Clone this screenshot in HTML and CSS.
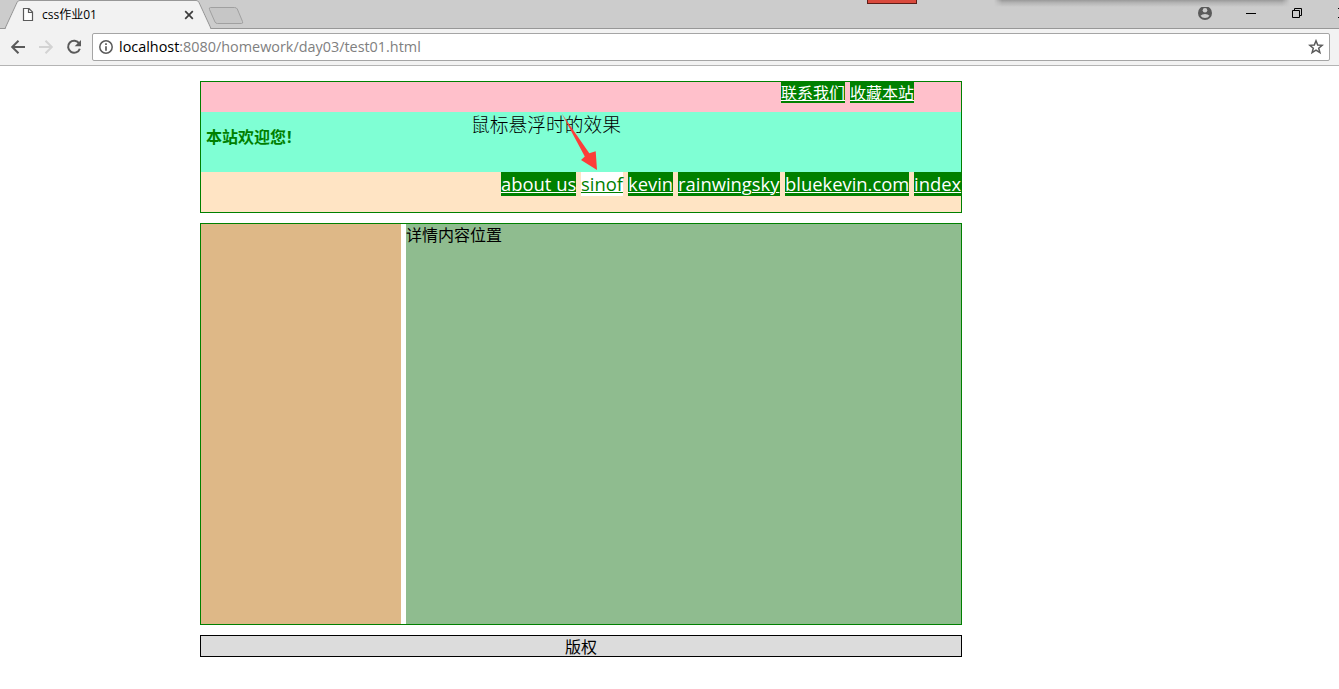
FILE: index.html
```html
<!DOCTYPE html>
<html lang="zh">
<head>
<meta charset="utf-8">
<title>css作业01</title>
<link rel="stylesheet" href="styles.css">
</head>
<body>
<div class="tabstrip">
  <svg class="tab-shape" width="250" height="29" viewBox="0 0 250 29">
    <path d="M0 28.5H5L17 2.5Q18 .5 20 .5H196Q198 .5 199 2.5L211 28.5H250" fill="none" stroke="#979797"/>
    <path d="M5.5 29L17.5 2.8Q18.3 1 20 1H196Q197.700 1 198.500 2.800L210.500 29Z" fill="#f2f2f2"/>
    <path d="M210.500 7.500H234.500Q236.500 7.500 237.300 9L242.500 21.500Q243.300 23.500 241.500 23.500H217.500Q215.700 23.500 215 22L209.500 9.500Q208.700 7.500 210.500 7.500Z" fill="#c6c6c6" stroke="#a0a0a0"/>
  </svg>
  <div class="tab">
    <svg class="page-icon" width="12" height="15" viewBox="0 0 12 15"><path d="M1.500 1.500H7L10.500 5V13.500H1.500ZM6.500 1.500V5.500H10.500" fill="#fff" stroke="#5a5a5a" stroke-width="1.200"/></svg>
    <span class="tab-title">css作业01</span>
    <svg class="tab-close" width="10" height="10" viewBox="0 0 10 10"><path d="M1.200 1.200L8.800 8.800M8.800 1.200L1.200 8.800" stroke="#3c3c3c" stroke-width="1.700"/></svg>
  </div>
  <div class="red-chip"></div>
  <div class="top-shadow"></div>
  <div class="window-buttons">
    <svg width="141" height="28" viewBox="0 0 141 28">
      <circle cx="7" cy="13" r="7" fill="#5a5a5a"/>
      <circle cx="7" cy="10.300" r="2.300" fill="#ccc"/>
      <path d="M2.500 15.700Q4 14 7 14T11.500 15.700Q10 18 7 18T2.500 15.700Z" fill="#ccc"/>
      <path d="M48 13.500H58" stroke="#000"/>
      <path d="M94.500 10.500H101.500V17.500H94.500ZM96.500 10.500V8.500H103.500V15.500H101.500" fill="none" stroke="#000"/>
      <path d="M140 8.500H141M140 17.500H141" stroke="#000"/>
    </svg>
  </div>
</div>
<div class="toolbar">
  <svg class="nav-icons" width="92" height="36" viewBox="0 29 92 36">
    <path d="M25 47H12.500M18.500 40.700L12.200 47L18.500 53.300" fill="none" stroke="#5a5a5a" stroke-width="2"/>
    <path d="M39 47H51.500M45.500 40.700L51.800 47L45.500 53.300" fill="none" stroke="#d3d3d3" stroke-width="2"/>
    <path d="M79.200 43.600A6 6 0 1 0 79.800 48.700" fill="none" stroke="#5a5a5a" stroke-width="2"/>
    <path d="M81 40V46.300H74.700Z" fill="#5a5a5a"/>
  </svg>
  <div class="omnibox">
    <svg class="info" width="14" height="14" viewBox="0 0 14 14"><circle cx="7" cy="7" r="6.200" fill="none" stroke="#5a5a5a" stroke-width="1.500"/><path d="M7 3.300V5M7 6.200V10.700" stroke="#5a5a5a" stroke-width="1.700"/></svg>
    <span class="url"><span class="host">localhost</span>:8080/homework/day03/test01.html</span>
    <svg class="star" width="16" height="16" viewBox="0 0 16 16"><path d="M8 1.800L9.700 6L14.200 6.300L10.700 9.200L11.900 13.600L8 11.200L4.100 13.600L5.300 9.200L1.800 6.300L6.300 6Z" fill="none" stroke="#5a5a5a" stroke-width="1.500"/></svg>
  </div>
</div>
<main class="page">
  <header class="header">
    <div class="top"><a class="link">联系我们</a><a class="link">收藏本站</a></div>
    <div class="banner"><strong class="welcome">本站欢迎您<span class="mark">!</span></strong></div>
    <nav class="menu">
      <a class="link about">about us</a><a class="link sinof">sinof</a><a class="link kevin">kevin</a><a class="link rain">rainwingsky</a><a class="link blue">bluekevin.com</a><a class="link index">index</a>
    </nav>
    <div class="note">鼠标悬浮时的效果</div>
    <svg class="arrow" width="40" height="60" viewBox="560 112 40 60"><path d="M561.700 113.500L589.300 153.300L595.700 151.300L597 170L581 160L584.800 156.500Z" fill="#fc3d39"/></svg>
  </header>
  <section class="content">
    <aside class="side"></aside>
    <div class="detail">详情内容位置</div>
  </section>
  <footer class="footer">版权</footer>
</main>
</body>
</html>
```
FILE: styles.css
```css
* { box-sizing: border-box; }
body {
  margin: 0;
  height: 689px;
  overflow: hidden;
  background: #fff;
  font: 16px/21px "Open Sans", "Noto Sans CJK SC", sans-serif;
  color: #000;
}
svg { display: block; flex: none; }
.tabstrip {
  position: relative;
  display: flex;
  height: 29px;
  background: #ccc;
  border-bottom: 1px solid #979797;
}
.tab-shape { position: absolute; left: 0; top: 0; }
.tab {
  position: relative;
  display: flex;
  align-items: center;
  width: 211px;
  height: 29px;
  padding-left: 22px;
}
.tab-title {
  width: 142px;
  margin-left: 8px;
  font-size: 12px;
  line-height: 16px;
  white-space: nowrap;
}
.red-chip {
  position: absolute;
  left: 867px;
  top: 0;
  width: 50px;
  height: 4px;
  background: #d94a3d;
  border: 1px solid #5d1d18;
  border-top: 0;
}
.top-shadow {
  position: absolute;
  left: 994px;
  top: 0;
  width: 296px;
  height: 7px;
  background: linear-gradient(#999, #b4b4b4 40%, #ccc);
  -webkit-mask-image: linear-gradient(90deg, transparent, #000 8px, #000 288px, transparent);
  mask-image: linear-gradient(90deg, transparent, #000 8px, #000 288px, transparent);
}
.window-buttons { margin-left: auto; }
.toolbar {
  display: flex;
  height: 37px;
  background: #f2f2f2;
  border-bottom: 1px solid #b4b4b4;
}
.omnibox {
  display: flex;
  align-items: center;
  width: 1238px;
  height: 28px;
  margin-top: 4px;
  padding: 0 5px 0 6px;
  background: #fff;
  border: 1px solid #a5a5a5;
  border-radius: 2px;
}
.url {
  margin-left: 6px;
  padding-bottom: 2px;
  font-size: 14.400px;
  color: #808080;
  white-space: nowrap;
}
.host { color: #000; }
.star { margin-left: auto; }
.page {
  display: flex;
  flex-direction: column;
  gap: 10px;
  width: 762px;
  margin: 15px 0 0 200px;
}
.header {
  position: relative;
  height: 132px;
  border: 1px solid green;
}
.top {
  display: flex;
  gap: 5px;
  height: 30px;
  padding-left: 580px;
  background: pink;
}
.top .link { height: 21px; width: 64px; line-height: 23px; }
.link {
  background: green;
  color: #fff;
  text-decoration: underline;
  text-decoration-thickness: 1px;
  white-space: nowrap;
}
.banner {
  height: 60px;
  padding: 15px 5px;
  background: aquamarine;
}
.welcome { color: green; }
.mark { margin-left: 1px; }
.menu {
  display: flex;
  justify-content: flex-end;
  gap: 5px;
  height: 40px;
  background: bisque;
  font-size: 18.400px;
  line-height: 24px;
}
.menu .link { height: 24px; }
.about { width: 75px; }
.sinof { width: 42px; }
.kevin { width: 45px; }
.rain { width: 102px; }
.blue { width: 124px; }
.index { width: 47px; }
.menu .sinof { background: #fff; color: green; }
.note {
  position: absolute;
  left: 270px;
  top: 29px;
  font: 300 18.750px/26px "Noto Sans CJK SC", sans-serif;
  white-space: nowrap;
}
.arrow { position: absolute; left: 359px; top: 30px; }
.content {
  display: flex;
  gap: 5px;
  height: 402px;
  border: 1px solid green;
}
.side { width: 200px; background: burlywood; }
.detail { flex: 1; padding-top: 1px; background: #8fbc8f; }
.footer {
  height: 22px;
  border: 1px solid #000;
  background: #dcdcdc;
  line-height: 23px;
  text-align: center;
}
```
